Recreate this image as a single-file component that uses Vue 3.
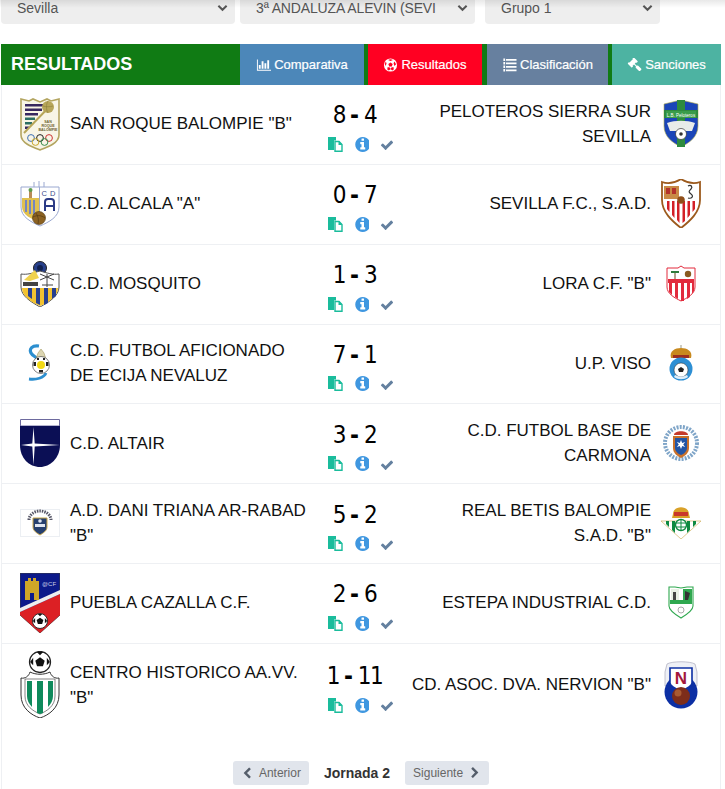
<template>
  <div class="page">
    <div class="filters">
      <div v-for="f in filters" :key="f.label" class="select" :class="f.size">
        <span class="select-text">{{ f.label }}</span>
        <svg class="select-arrow" viewBox="0 0 12 8"><path d="M1.500 1.500 6 6l4.500-4.500" fill="none" stroke="#555" stroke-width="2.200" /></svg>
      </div>
    </div>

    <div class="panel">
      <div class="panel-head">
        <h2>RESULTADOS</h2>
        <nav class="tabs">
          <a class="tab tab-blue">
            <svg class="tab-icon" viewBox="0 0 2048 1792"><path fill="#fff" d="M640 896v512h-256v-512h256zm384-512v1024h-256v-1024h256zm1024 1152v128h-1920v-1536h128v1408h1792zm-640-896v768h-256v-768h256zm384-384v1152h-256v-1152h256z" /></svg>
            Comparativa
          </a>
          <a class="tab tab-red">
            <svg class="tab-icon" viewBox="0 0 16 16">
              <circle cx="8" cy="8" r="7.500" fill="#fff" />
              <path fill="#ff0022" d="M8 5l2.500 1.800-1 2.900h-3l-1-2.900zM8 1.500a6.500 6.500 0 0 1 2.800.7L8 3.500 5.200 2.200A6.500 6.500 0 0 1 8 1.500zM14.400 7l-1.900 2-1-3 1-1.900zM1.600 7l.9-2.900 1 1.900-1 3zM4.300 13l.3-2.300h2.200l1.400 2L6 14.300zM11.700 13l-1.700 1.300-2-1.600 1.400-2h2.200z" />
            </svg>
            Resultados
          </a>
          <a class="tab tab-slate">
            <svg class="tab-icon" viewBox="0 0 16 16"><path fill="#fff" d="M1 .5h2v3H1zM4 1h12v2H4zM1 4.500h2v3H1zM4 5h12v2H4zM1 8.500h2v3H1zM4 9h12v2H4zM1 12.500h2v3H1zM4 13h12v2H4z" /></svg>
            Clasificación
          </a>
          <a class="tab tab-teal">
            <svg class="tab-icon" viewBox="0 0 1792 1792"><path fill="#fff" d="M1771 1440q0 53-37 90l-107 108q-39 37-91 37-53 0-90-37l-363-364q-38-36-38-90 0-53 43-96l-256-256-126 126q-14 14-34 14t-34-14q2 2 12.500 12t12.500 13 10 11.500 10 13.500 6 13.500 5.500 16.500 1.500 18q0 38-28 68-3 3-16.500 18t-19 20.500-18.500 16.500-22 15.500-22 9-26 4.500q-40 0-68-28l-408-408q-28-28-28-68 0-13 4.500-26t9-22 15.500-22 16.500-18.500 20.500-19 18-16.500q30-28 68-28 10 0 18 1.500t16.500 5.500 13.500 6 13.500 10 11.500 10 13 12.500 12 12.500q-14-14-14-34t14-34l348-348q14-14 34-14t34 14q-2-2-12.500-12t-12.500-13-10-11.500-10-13.500-6-13.500-5.500-16.500-1.500-18q0-38 28-68 3-3 16.500-18t19-20.500 18.500-16.500 22-15.500 22-9 26-4.500q40 0 68 28l408 408q28 28 28 68 0 13-4.500 26t-9 22-15.500 22-16.500 18.500-20.500 19-18 16.500q-30 28-68 28-10 0-18-1.500t-16.500-5.500-13.500-6-13.500-10-11.500-10-13-12.500-12-12.500q14 14 14 34t-14 34l-126 126 256 256q43-43 96-43 52 0 91 37l363 363q37 39 37 91z" /></svg>
            Sanciones
          </a>
        </nav>
      </div>

      <div v-for="m in matches" :key="m.home" class="match">
        <div class="team">
          <svg class="crest" :viewBox="crests[m.homeCrest].box" :style="{ height: crests[m.homeCrest].h + 'px' }" v-html="crests[m.homeCrest].art"></svg>
          <span class="team-name">{{ m.home }}</span>
        </div>

        <div class="result">
          <div class="score"><span>{{ m.score[0] }}</span><b>-</b><span>{{ m.score[1] }}</span></div>
          <div class="actions">
            <svg class="act act-doc" viewBox="0 0 15 15">
              <path fill="#1abc9c" d="M0 0h8v3.500H6V13H0z" />
              <path fill="#fff" stroke="#1abc9c" stroke-width="1.400" d="M7 4.500h4l3 3v6.800H7z" />
              <path fill="#1abc9c" d="M10.500 4.500h1l2.500 3v.5h-3.500z" />
            </svg>
            <svg class="act act-info" viewBox="0 0 1536 1536"><path fill="#3f97e0" transform="translate(0 -128)" d="M1152 1376v-160q0-14-9-23t-23-9h-96v-512q0-14-9-23t-23-9h-320q-14 0-23 9t-9 23v160q0 14 9 23t23 9h96v320h-96q-14 0-23 9t-9 23v160q0 14 9 23t23 9h448q14 0 23-9t9-23zm-128-896v-160q0-14-9-23t-23-9h-192q-14 0-23 9t-9 23v160q0 14 9 23t23 9h192q14 0 23-9t9-23zm640 416q0 209-103 385.500t-279.500 279.500-385.500 103-385.500-103-279.500-279.500-103-385.500 103-385.500 279.500-279.500 385.500-103 385.500 103 279.500 279.500 103 385.500z" /></svg>
            <svg class="act act-check" viewBox="0 0 1792 1792"><path fill="#64809f" d="M1671 566q0 40-28 68l-724 724-136 136q-28 28-68 28t-68-28l-136-136-362-362q-28-28-28-68t28-68l136-136q28-28 68-28t68 28l294 295 656-657q28-28 68-28t68 28l136 136q28 28 28 68z" /></svg>
          </div>
        </div>

        <div class="team team-right">
          <span class="team-name">{{ m.away }}</span>
          <svg class="crest" :viewBox="crests[m.awayCrest].box" :style="{ height: crests[m.awayCrest].h + 'px' }" v-html="crests[m.awayCrest].art"></svg>
        </div>
      </div>

      <div class="pager">
        <a class="pager-btn">
          <svg class="chev" viewBox="0 0 1792 1792"><path fill="#555e6b" d="M1427 301l-531 531 531 531q19 19 19 45t-19 45l-166 166q-19 19-45 19t-45-19l-742-742q-19-19-19-45t19-45l742-742q19-19 45-19t45 19l166 166q19 19 19 45t-19 45z" transform="translate(0 64)" /></svg>
          Anterior
        </a>
        <strong class="pager-current">Jornada 2</strong>
        <a class="pager-btn">
          Siguiente
          <svg class="chev" viewBox="0 0 1792 1792"><path fill="#555e6b" d="M1363 877l-742 742q-19 19-45 19t-45-19l-166-166q-19-19-19-45t19-45l531-531-531-531q-19-19-19-45t19-45l166-166q19-19 45-19t45 19l742 742q19 19 19 45t-19 45z" /></svg>
        </a>
      </div>
    </div>
  </div>
</template>

<script setup>
const filters = [
  { label: 'Sevilla', size: 'sel-a' },
  { label: '3ª ANDALUZA ALEVIN (SEVI', size: 'sel-b' },
  { label: 'Grupo 1', size: 'sel-c' },
]

const matches = [
  { home: 'SAN ROQUE BALOMPIE "B"', score: [8, 4], away: 'PELOTEROS SIERRA SUR\nSEVILLA', homeCrest: 'sanroque', awayCrest: 'peloteros' },
  { home: 'C.D. ALCALA "A"', score: [0, 7], away: 'SEVILLA F.C., S.A.D.', homeCrest: 'alcala', awayCrest: 'sevilla' },
  { home: 'C.D. MOSQUITO', score: [1, 3], away: 'LORA C.F. "B"', homeCrest: 'mosquito', awayCrest: 'lora' },
  { home: 'C.D. FUTBOL AFICIONADO\nDE ECIJA NEVALUZ', score: [7, 1], away: 'U.P. VISO', homeCrest: 'ecija', awayCrest: 'viso' },
  { home: 'C.D. ALTAIR', score: [3, 2], away: 'C.D. FUTBOL BASE DE\nCARMONA', homeCrest: 'altair', awayCrest: 'carmona' },
  { home: 'A.D. DANI TRIANA AR-RABAD\n"B"', score: [5, 2], away: 'REAL BETIS BALOMPIE\nS.A.D. "B"', homeCrest: 'triana', awayCrest: 'betis' },
  { home: 'PUEBLA CAZALLA C.F.', score: [2, 6], away: 'ESTEPA INDUSTRIAL C.D.', homeCrest: 'puebla', awayCrest: 'estepa' },
  { home: 'CENTRO HISTORICO AA.VV.\n"B"', score: [1, 11], away: 'CD. ASOC. DVA. NERVION "B"', homeCrest: 'centro', awayCrest: 'nervion' },
]

const ball = (x, y, r) =>
  `<circle cx="${x}" cy="${y}" r="${r}" fill="#fff" stroke="#222" stroke-width="${r * 0.12}"/>` +
  `<path d="M${x} ${y - r * 0.45}l${r * 0.45} ${r * 0.33}-${r * 0.17} ${r * 0.52}h-${r * 0.56}l-${r * 0.17}-${r * 0.52}z" fill="#111"/>` +
  `<path d="M${x - r * 0.3} ${y - r * 0.95}h${r * 0.6}l-${r * 0.3} ${r * 0.3}zM${x - r * 0.95} ${y}l${r * 0.3}-${r * 0.4}v${r * 0.7}zM${x + r * 0.95} ${y}l-${r * 0.3}-${r * 0.4}v${r * 0.7}z" fill="#111"/>`

const crests = {
  sanroque: {
    box: '0 0 40 54', h: 54,
    art: `<path d="M1 2l8 2 4-2 7 3 7-3 4 2 8-2v36c0 8-11 12-19 15C12 50 1 46 1 38z" fill="#f8f5e6" stroke="#b3a560" stroke-width="1.600"/>
      <path d="M5 7h20v2.500H5zM5 11.500h17v2.500H5zM5 16h13v2.500H5z" fill="#37275f"/><path d="M5 20.500h10v2.500H5zM5 25h7v2.500H5z" fill="#2c6e63"/><path d="M5 29.500h4v2.500H5z" fill="#37275f"/>
      <path d="M4 36 31 8" stroke="#b7a659" stroke-width="2"/>
      <circle cx="28" cy="10" r="6" fill="#b7a659"/><path d="M23 9c3 1 7 1 10 0M28 4c-2 3-2 9 0 12" fill="none" stroke="#8c7d39" stroke-width=".6"/>
      <text x="28" y="26" text-anchor="middle" font-size="3.600" font-weight="700" font-family="Liberation Sans, sans-serif" fill="#6c6330">SAN</text>
      <text x="28" y="30" text-anchor="middle" font-size="3.600" font-weight="700" font-family="Liberation Sans, sans-serif" fill="#6c6330">ROQUE</text>
      <text x="28" y="34" text-anchor="middle" font-size="3.600" font-weight="700" font-family="Liberation Sans, sans-serif" fill="#6c6330">BALOMPIE</text>
      <g fill="none" stroke-width="1"><circle cx="11" cy="41" r="3.400" stroke="#3d70b5"/><circle cx="20" cy="41" r="3.400" stroke="#222"/><circle cx="29" cy="41" r="3.400" stroke="#c33"/><circle cx="15.500" cy="45" r="3.400" stroke="#c9a82b"/><circle cx="24.500" cy="45" r="3.400" stroke="#3a8c4c"/></g>`,
  },
  peloteros: {
    box: '0 0 36 47', h: 47,
    art: `<path d="M1 4 18 0l17 4v22c0 11-9 17-17 21C10 43 1 37 1 26z" fill="#1b45b8" stroke="#b8b24a" stroke-width=".6"/>
      <path d="M14 0h8v10h13v8H22v29h-8V18H1v-8h13z" fill="#2e8b3e"/>
      <path d="M3 11h30v7H3z" fill="#3a9c4a"/><text x="18" y="16.500" text-anchor="middle" font-size="4.500" font-family="Liberation Sans, sans-serif" fill="#fff">L.B. Peloteros</text>
      <path d="M4 23c8-3 20-3 28 0l-3 8H7z" fill="#e8ece9"/>
      <circle cx="18" cy="34" r="5.500" fill="#fff" stroke="#333" stroke-width=".7"/><circle cx="18" cy="34" r="1.800" fill="#333"/>`,
  },
  alcala: {
    box: '0 0 40 46', h: 46,
    art: `<path d="M1 6h38v20c0 10-10 15-19 19C11 41 1 36 1 26z" fill="#fff" stroke="#9aa8d0"/>
      <path d="M19 0v6M14 1v5M24 1v5" stroke="#9aa8d0"/><path d="M19.500 6v36" stroke="#9aa8d0"/>
      <path d="M2 17h17v24C12 38 2 34 2 26z" fill="#e0c04f"/><path d="M5 19h2v12H5zM9 19h2v14H9zM13 19h2v16h-2z" fill="#7385c0"/>
      <path d="M9 8h3v9H9z" fill="#b78c5a"/><circle cx="10.500" cy="9" r="2" fill="#5c9c4e"/>
      <circle cx="19" cy="37" r="6.500" fill="#8c6222" stroke="#4b3410" stroke-width=".6"/><path d="M13 36c4-2 8-2 12 1M16 32c2 3 3 7 2 11" fill="none" stroke="#4b3410" stroke-width=".6"/>
      <text x="21.500" y="15" font-size="7.500" font-family="Liberation Sans, sans-serif" fill="#3d4c8e">C</text><text x="30" y="15" font-size="7.500" font-family="Liberation Sans, sans-serif" fill="#3d4c8e">D</text>
      <path d="M25 30V21c0-2 1-3 3-3h3c2 0 3 1 3 3v9M25 25h9" fill="none" stroke="#2b3a85" stroke-width="2"/>`,
  },
  sevilla: {
    box: '0 0 40 49', h: 49,
    art: `<path d="M1 3c5 2 11 2 19-3 8 5 14 5 19 3v18c0 12-10 21-19 28C11 42 1 33 1 21z" fill="#fff" stroke="#9c5a1d" stroke-width="1.800"/>
      <path d="M6 22h2.500v11L6 30zM11 22h2.500v17L11 36zM16 22h2.500v22L16 41zM21.500 22H24v20l-2.500 2zM26.500 22H29v14l-2.500 3zM31.500 22H34v8l-2.500 3z" fill="#d32027"/>
      <path d="M3 7h15v13H3z" fill="#c98a45"/><path d="M5 9h4v6H5zM11 9h4v6h-4z" fill="#b3322a"/>
      <circle cx="20" cy="21" r="3.800" fill="#8f4f1a"/><path d="M27 7c3-2 5 1 3 3s-3 3 0 5 1 5-3 4" fill="none" stroke="#333" stroke-width="1.200"/>`,
  },
  mosquito: {
    box: '0 0 40 46', h: 46,
    art: `<circle cx="20" cy="7" r="6.500" fill="#27408b" stroke="#222"/><circle cx="20" cy="7" r="3" fill="#10204f"/>
      <path d="M1 13c6 1 12-1 19-3 7 2 13 4 19 3v13c0 9-10 15-19 20C11 41 1 35 1 26z" fill="#fff" stroke="#555"/>
      <path d="M4 19 15 9l4 8-9 3z" fill="#f0d24d"/><path d="M3 21h15v4H3z" fill="#444"/>
      <path d="M27 13v13M20 13l14 6M34 13l-14 6M22 24h11" stroke="#444" fill="none"/>
      <path d="M2 27h36c0 8-9 14-18 18C11 41 2 35 2 27z" fill="#f2c230"/>
      <path d="M8 27h4v11l-4-3zM16 27h4v17l-4-2zM24 27h4v15l-4 2zM32 27h4v8l-4 3z" fill="#28408f"/>`,
  },
  lora: {
    box: '0 0 30 37', h: 37,
    art: `<path d="M1 3h11l3-2 3 2h11v19c0 7-8 11-14 14C9 33 1 29 1 22z" fill="#fff" stroke="#e22b3d"/>
      <path d="M2 14h26v4H2z" fill="#e22b3d"/><path d="M3 18h3v12l-3-3zM9 18h3v16l-3-2zM15 18h3v18h-3zM21 18h3v14l-3 2zM26 18h2v8l-2 3z" fill="#e22b3d"/>
      <path d="M5 6h8v2H5z" fill="#2f7c3c"/><path d="M8.500 8h1v6h-1z" fill="#6c4a20"/><circle cx="22" cy="9" r="3.200" fill="#8a5a20"/>`,
  },
  ecija: {
    box: '0 0 24 38', h: 38,
    art: `<path d="M11 2C4 1 1 5 3 9c1.500 3 5 4 7 6" fill="none" stroke="#2c8fd0" stroke-width="3.200"/>
      <path d="M1 35c7 1 15-1 17-6" fill="none" stroke="#2c8fd0" stroke-width="2.800"/>
      <path d="M10 9l3-4 3 4 2 6H8z" fill="#dcd6b2" stroke="#998c4f" stroke-width=".5"/>
      <circle cx="13" cy="21" r="8.500" fill="#fff" stroke="#333" stroke-width=".6"/><circle cx="13" cy="21" r="4" fill="#f2d916"/>
      <path d="M5.500 18h2.500v4H5.500zM18 18h2.500v4H18zM11 26h4v2.500h-4zM9 14h2v2H9zM15 14h2v2h-2z" fill="#222"/>`,
  },
  viso: {
    box: '0 0 24 36', h: 36,
    art: `<path d="M11.500 0h1v3h-1z" fill="#998"/><path d="M2 13C0 6 6 3 12 3c6 0 12 3 10 10z" fill="#c8891e"/><path d="M4 10h16v3H4z" fill="#9c2e20"/>
      <circle cx="12" cy="24" r="11.500" fill="#2d8fd4"/><circle cx="12" cy="25" r="7" fill="#fff" stroke="#222" stroke-width=".5"/>
      <path d="M12 22l3 2-1 3h-4l-1-3z" fill="#222"/><path d="M5 32c4 3 10 3 14 0l-1-2c-4 2-8 2-12 0z" fill="#dfeefa"/>`,
  },
  altair: {
    box: '0 0 40 48', h: 48,
    art: `<path d="M.5.500h39V7H.500z" fill="#fff" stroke="#6d6a9e"/>
      <path d="M0 7h40v19c0 13-10 22-20 22C9 48 0 39 0 26z" fill="#0b0f55"/>
      <path d="M13.500 8l1.200 16.500L40 26l-25.300 1.500L13.500 46l-1.200-18.500L1 26l11.300-1.500z" fill="#fff"/>`,
  },
  carmona: {
    box: '0 0 36 42', h: 42,
    art: `<circle cx="18" cy="21" r="16" fill="none" stroke="#7fa5c8" stroke-width="4" stroke-dasharray="2 1.200"/>
      <path d="M11 13c0-5 14-5 14 0z" fill="#c63b2b"/><path d="M10 14h16v12c0 5-4 8-8 10-4-2-8-5-8-10z" fill="#c9712a"/>
      <path d="M12 16h12v10c0 3-3 6-6 7-3-1-6-4-6-7z" fill="#2255a5"/>
      <path d="M18 18l1.200 3 3-1-2 2.500 2 2.500-3-1-1.200 3-1.200-3-3 1 2-2.500-2-2.500 3 1z" fill="#fff"/>`,
  },
  triana: {
    box: '0 0 40 28', h: 28,
    art: `<rect x=".5" y=".5" width="39" height="27" fill="#fff" stroke="#eceff3"/>
      <path d="M9 11a11 9 0 0 1 22 0" fill="none" stroke="#556" stroke-width="3" stroke-dasharray="1.500 1"/>
      <path d="M13 9h14v9c0 4-4 6-7 8-3-2-7-4-7-8z" fill="#26406f" stroke="#c9a64a"/>
      <path d="M15 15h10v3h-10z" fill="#dfe6f2"/><circle cx="20" cy="12" r="1.800" fill="#dfe6f2"/>`,
  },
  betis: {
    box: '0 0 40 32', h: 32,
    art: `<path d="M12 7c0-9 16-9 16 0l1 4H11z" fill="#d9a128"/><path d="M13 5h14v4H13z" fill="#c9382b"/>
      <path d="M0 14h40L20 32z" fill="#fff" stroke="#c9a64a" stroke-width=".6"/>
      <path d="M5 14h3v6l-3-3zM11 14h3v12l-3-3zM26 14h3v9l-3 3zM32 14h3v3l-3 3z" fill="#0f8a41"/>
      <circle cx="20" cy="18" r="5.500" fill="#fff" stroke="#0f8a41" stroke-width="1.400"/><path d="M20 12v12M15 16h10M15 20h10" stroke="#0f8a41"/>`,
  },
  estepa: {
    box: '0 0 26 33', h: 33,
    art: `<path d="M1 1h6l6 1 6-1h6v19c0 4-7 9-12 12C8 29 1 24 1 20z" fill="#fff" stroke="#2fa84f" stroke-width="1.100"/>
      <path d="M3 3h8v11H3z" fill="#e8efe4"/><path d="M15 3h9v11h-9z" fill="#2fa84f"/>
      <path d="M5 6h3v8H5z" fill="#444"/><path d="M17 5l5 2-2 7h-3z" fill="#333"/><path d="M2 14h22v4H2z" fill="#2fa84f"/>
      <circle cx="13" cy="24" r="3" fill="none" stroke="#aaa"/>`,
  },
  nervion: {
    box: '0 0 34 48', h: 48,
    art: `<path d="M3 3c5-3 23-3 28 0l2 8v14H1V11z" fill="#eef0f6" stroke="#aab" stroke-width=".7"/>
      <circle cx="17" cy="31" r="16.500" fill="#0c2fa4"/>
      <path d="M6 7h22v15c0 3-6 6-11 8-5-2-11-5-11-8z" fill="#fff" stroke="#0c2fa4" stroke-width="1.600"/>
      <text x="17" y="23" text-anchor="middle" font-size="17" font-weight="700" font-family="Liberation Sans, sans-serif" fill="#a3173c">N</text>
      <circle cx="17" cy="35" r="9" fill="#7d2d1a"/><circle cx="14" cy="32" r="3.500" fill="#a85a32"/>`,
  },
  puebla: {
    box: '0 0 40 60', h: 60,
    art: `<path d="M0 0h40v42L20 60 0 42z" fill="#0c1a8a" stroke="#443" stroke-width=".8"/>
      <path d="M0 39 40 21v21L20 60 0 42z" fill="#dc2024"/><path d="M0 39 40 21v-4L0 35z" fill="#eee"/>
      <path d="M5 8h3V5h3v3h2V5h3v3h3v19h-5v-7h-4v7H5z" fill="#cfa628"/>
      <text x="22" y="13" font-size="6" font-family="Liberation Sans, sans-serif" fill="#c9cfe6">@CF</text>
      ${ball(20, 48, 7.500)}`,
  },
  centro: {
    box: '0 0 40 67', h: 67,
    art: `${ball(20, 11, 10.500)}
      <path d="M1 27c4 1 8-2 9-6 6 3 14 3 20 0 1 4 5 7 9 6v17c0 13-10 20-19 23C11 64 1 57 1 44z" fill="#fff" stroke="#333"/>
      <path d="M5 28h30v17c0 10-8 15-15 18C13 60 5 55 5 45z" fill="#fff" stroke="#333" stroke-width=".6"/>
      <path d="M7 30h5v26c-3-3-5-7-5-11zM17 30h6v32l-3 1-3-1zM28 30h5v15c0 4-2 8-5 11z" fill="#0f8a5c"/>`,
  },
}
</script>

<style scoped>
.page {
  width: 725px;
  height: 789px;
  overflow: hidden;
  position: relative;
  background: #fff;
  color: #111;
  font-family: "Liberation Sans", Arial, sans-serif;
}

.page::before {
  content: "";
  position: absolute;
  inset: 0 0 auto 0;
  height: 8px;
  background: linear-gradient(rgba(0, 0, 0, 0.09), rgba(0, 0, 0, 0));
}

.filters {
  display: flex;
  height: 24px;
  margin: 0 0 20px 1px;
}

.select {
  display: flex;
  align-items: center;
  justify-content: space-between;
  box-sizing: border-box;
  height: 24px;
  padding: 0 7px 8px 16px;
  background: #eee;
  border-radius: 0 0 4px 4px;
  font-size: 14px;
  line-height: 16px;
  color: #555;
}

.select-text {
  white-space: nowrap;
}

.select-arrow {
  width: 11px;
  height: 8px;
  flex: none;
}

.sel-a { width: 234px; margin-right: 5px; }
.sel-b { width: 235px; margin-right: 10px; letter-spacing: -0.15px; }
.sel-c { width: 175px; }

.panel {
  width: 720px;
  margin-left: 1px;
  padding-bottom: 30px;
  box-sizing: border-box;
  border: 1px solid #eef0f3;
  border-top: 0;
}

.panel-head {
  display: flex;
  height: 41px;
  margin: 0 -1px;
  background: #107b14;
  color: #fff;
}

.panel-head h2 {
  width: 239px;
  margin: 0;
  padding-left: 10px;
  box-sizing: border-box;
  font-size: 18px;
  line-height: 40px;
  font-weight: 700;
}

.tabs {
  flex: 1;
  display: flex;
}

.tab {
  display: flex;
  align-items: center;
  justify-content: center;
  gap: 3px;
  font-size: 13px;
  color: #fff;
  -webkit-text-stroke: 0.2px #fff;
}

.tab-icon {
  width: 15px;
  height: 14px;
}

.tab-blue { width: 124px; background: #4c87b9; }
.tab-red { width: 114px; margin-left: 4px; background: #ff0022; }
.tab-slate { width: 121px; margin-left: 5px; background: #67809f; }
.tab-teal { width: 109px; margin-left: 4px; background: #4db3a2; }

.match {
  display: grid;
  grid-template-columns: 308px 92px 318px;
  height: 79.85px;
  box-sizing: border-box;
  border-bottom: 1px solid #eef0f3;
}

.match:nth-last-child(2) {
  height: 83px;
  border-bottom: 0;
}

.team {
  display: flex;
  align-items: center;
  padding-left: 18px;
  padding-bottom: 1px;
}

.team-right {
  justify-content: flex-end;
  padding: 0 19px 1px 0;
  text-align: right;
}

.crest {
  width: 40px;
  flex: none;
}

.team-name {
  flex: none;
  width: 242px;
  margin: 0 10px;
  font-size: 17px;
  line-height: 25px;
  white-space: pre-line;
}

.result {
  display: flex;
  flex-direction: column;
  align-items: center;
  justify-content: center;
  padding-top: 5px;
}

.score {
  display: flex;
  align-items: center;
  justify-content: center;
  font-family: "DejaVu Sans Condensed", "DejaVu Sans", sans-serif;
  font-size: 24px;
  line-height: 32px;
  letter-spacing: -1.5px;
  white-space: nowrap;
  color: #000;
  margin-right: 3px;
}

.score b {
  margin: 0 5px;
  letter-spacing: 0;
}

.actions {
  display: flex;
  align-items: center;
  justify-content: center;
  gap: 11px;
  height: 20px;
  margin: 3px 0 0 10px;
}

.act-doc { width: 15px; height: 15px; }
.act-info { width: 15px; height: 15px; }
.act-check { width: 14px; height: 14px; margin-top: 2px; }

.pager {
  display: flex;
  align-items: center;
  justify-content: center;
  gap: 15px;
  padding: 34px 0 0;
}

.pager-btn {
  display: flex;
  align-items: center;
  gap: 6px;
  height: 24px;
  padding: 0 8px;
  border-radius: 3px;
  background: #e1e5ec;
  font-size: 12px;
  color: #666;
}

.pager-current {
  font-size: 14px;
  color: #333;
}

.chev {
  width: 12px;
  height: 12px;
}
</style>
